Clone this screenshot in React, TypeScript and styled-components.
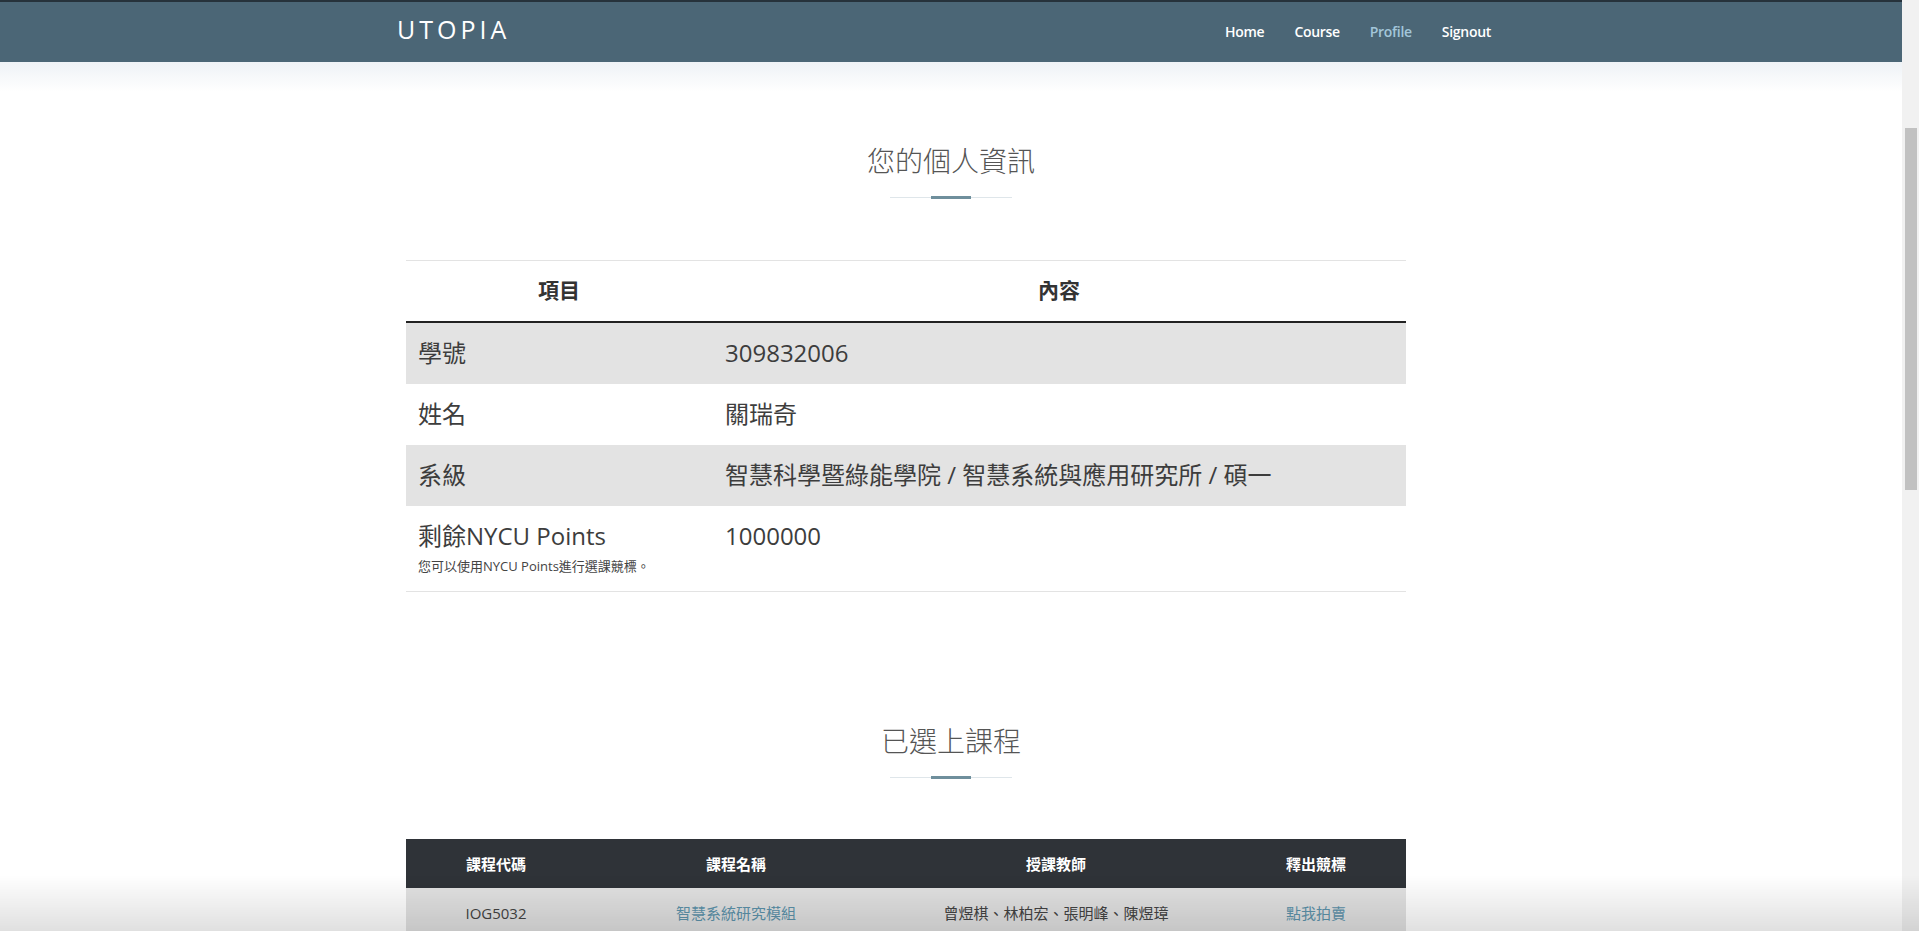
import React from "react";
import styled, { createGlobalStyle } from "styled-components";

const GlobalStyle = createGlobalStyle`
  html, body { margin: 0; padding: 0; height: 100%; overflow: hidden; background: #fff; }
  body { font-family: "Open Sans", "Noto Sans CJK TC", sans-serif; color: #333; }
  * { box-sizing: border-box; }
`;

const Screen = styled.div`
  display: flex;
  width: 1919px;
  height: 931px;
  overflow: hidden;
`;

const Page = styled.div`
  flex: 1;
  min-width: 0;
  display: flex;
  flex-direction: column;
  background: #fff;
`;

const Rail = styled.div`
  width: 17px;
  flex: none;
  background: #f1f1f1;
  display: flex;
  flex-direction: column;
  padding: 128px 2px 0 3px;
`;

const Thumb = styled.div`
  height: 362px;
  background: #c1c1c1;
`;

const Header = styled.header`
  height: 62px;
  flex: none;
  background: #4b6676;
  border-top: 2px solid #26323b;
  box-shadow: 0 6px 18px rgba(170, 190, 210, 0.35);
`;

const Container = styled.div`
  width: 1110px;
  margin: 0 auto;
`;

const NavBar = styled(Container)`
  height: 100%;
  display: flex;
  align-items: center;
  justify-content: space-between;
  padding: 0 15px 2px 1px;
`;

const Brand = styled.div`
  font-family: "Open Sans", sans-serif;
  font-size: 25px;
  font-weight: 400;
  letter-spacing: 4px;
  color: #fff;
  margin-top: -5px;
`;

const NavList = styled.nav`
  display: flex;
  gap: 30px;
  align-items: center;
`;

const NavLink = styled.a<{ $active?: boolean }>`
  font-family: "Open Sans", sans-serif;
  font-size: 14px;
  font-weight: 600;
  letter-spacing: -0.3px;
  color: ${(p) => (p.$active ? "#a3c6da" : "#fff")};
  text-decoration: none;
  margin-top: 1px;
`;

const Glow = styled.div`
  height: 30px;
  flex: none;
  background: linear-gradient(to bottom, #eef2f6, #fff);
`;

const Section = styled.section<{ $top: number }>`
  display: flex;
  flex-direction: column;
  align-items: center;
  padding-top: ${(p) => p.$top}px;
`;

const Title = styled.h2`
  margin: 0;
  font-family: "Noto Sans CJK TC", sans-serif;
  font-size: 28px;
  font-weight: 300;
  line-height: 40px;
  color: #555;
`;

const Divider = styled.div`
  margin-top: 16px;
  width: 122px;
  height: 3px;
  display: flex;
  align-items: center;
  justify-content: center;
  background: linear-gradient(to bottom, transparent 1px, #dfe6ea 1px, #dfe6ea 2px, transparent 2px);
`;

const DividerMark = styled.div`
  width: 40px;
  height: 3px;
  background: #6f8f9c;
`;

const TableWrap = styled(Container)`
  padding-left: 10px;
`;

const InfoTable = styled.div<{ $mt: number }>`
  width: 1000px;
  margin-top: ${(p) => p.$mt}px;
  border-top: 1px solid #e3e3e3;
`;

const InfoHead = styled.div`
  display: grid;
  grid-template-columns: 306px 1fr;
  height: 62px;
  align-items: center;
  border-bottom: 2px solid #222;
`;

const HeadCell = styled.div`
  text-align: center;
  font-family: "Open Sans", "Noto Sans CJK TC", sans-serif;
  font-size: 21px;
  font-weight: 700;
  color: #333;
  margin-top: -5px;
`;

const InfoRow = styled.div<{ $striped?: boolean; $last?: boolean }>`
  display: grid;
  grid-template-columns: 306px 1fr;
  align-items: start;
  background: ${(p) => (p.$striped ? "#e3e3e3" : "#fff")};
  padding: ${(p) => (p.$last ? "13px 0 15px" : "13px 0 14px")};
  border-bottom: ${(p) => (p.$last ? "1px solid #e3e3e3" : "none")};
`;

const Cell = styled.div<{ $pad: number }>`
  padding-left: ${(p) => p.$pad}px;
  font-family: "Open Sans", "Noto Sans CJK TC", sans-serif;
  font-size: 24px;
  font-weight: 400;
  line-height: 34px;
  color: #3d3d3d;
`;

const Note = styled.div`
  margin-top: 3px;
  font-size: 13px;
  line-height: 20px;
  color: #444;
`;

const CourseTable = styled.div`
  width: 1000px;
  margin-top: 60px;
`;

const CourseGrid = styled.div<{ $dark?: boolean }>`
  display: grid;
  grid-template-columns: 180px 300px 340px 180px;
  align-items: center;
  height: 49px;
  background: ${(p) => (p.$dark ? "#2f3338" : "#e2e2e2")};
`;

const CCell = styled.div<{ $head?: boolean; $link?: boolean }>`
  text-align: center;
  font-family: "Open Sans", "Noto Sans CJK TC", sans-serif;
  font-size: 15px;
  font-weight: ${(p) => (p.$head ? 700 : 400)};
  color: ${(p) => (p.$head ? "#fff" : p.$link ? "#5d93ab" : "#444")};
`;

const BottomShade = styled.div`
  position: fixed;
  left: 0;
  right: 0;
  bottom: 0;
  height: 56px;
  pointer-events: none;
  background: linear-gradient(to bottom, rgba(0, 0, 0, 0), rgba(0, 0, 0, 0.12));
`;

const info = [
  { k: "學號", v: "309832006" },
  { k: "姓名", v: "關瑞奇" },
  { k: "系級", v: "智慧科學暨綠能學院 / 智慧系統與應用研究所 / 碩一" },
];

export default function App() {
  return (
    <>
      <GlobalStyle />
      <Screen>
        <Page>
          <Header>
            <NavBar>
              <Brand>UTOPIA</Brand>
              <NavList>
                <NavLink>Home</NavLink>
                <NavLink>Course</NavLink>
                <NavLink $active>Profile</NavLink>
                <NavLink>Signout</NavLink>
              </NavList>
            </NavBar>
          </Header>
          <Glow />
          <Section $top={48}>
            <Title>您的個人資訊</Title>
            <Divider>
              <DividerMark />
            </Divider>
          </Section>
          <TableWrap>
            <InfoTable $mt={61}>
              <InfoHead>
                <HeadCell>項目</HeadCell>
                <HeadCell>內容</HeadCell>
              </InfoHead>
              {info.map((r, i) => (
                <InfoRow key={r.k} $striped={i % 2 === 0}>
                  <Cell $pad={12}>{r.k}</Cell>
                  <Cell $pad={13}>{r.v}</Cell>
                </InfoRow>
              ))}
              <InfoRow $last>
                <Cell $pad={12}>
                  剩餘NYCU Points
                  <Note>您可以使用NYCU Points進行選課競標。</Note>
                </Cell>
                <Cell $pad={13}>1000000</Cell>
              </InfoRow>
            </InfoTable>
          </TableWrap>
          <Section $top={128}>
            <Title>已選上課程</Title>
            <Divider>
              <DividerMark />
            </Divider>
          </Section>
          <TableWrap>
            <CourseTable>
              <CourseGrid $dark>
                <CCell $head>課程代碼</CCell>
                <CCell $head>課程名稱</CCell>
                <CCell $head>授課教師</CCell>
                <CCell $head>釋出競標</CCell>
              </CourseGrid>
              <CourseGrid>
                <CCell>IOG5032</CCell>
                <CCell $link>智慧系統研究模組</CCell>
                <CCell>曾煜棋、林柏宏、張明峰、陳煜璋</CCell>
                <CCell $link>點我拍賣</CCell>
              </CourseGrid>
            </CourseTable>
          </TableWrap>
        </Page>
        <Rail>
          <Thumb />
        </Rail>
      </Screen>
      <BottomShade />
    </>
  );
}
